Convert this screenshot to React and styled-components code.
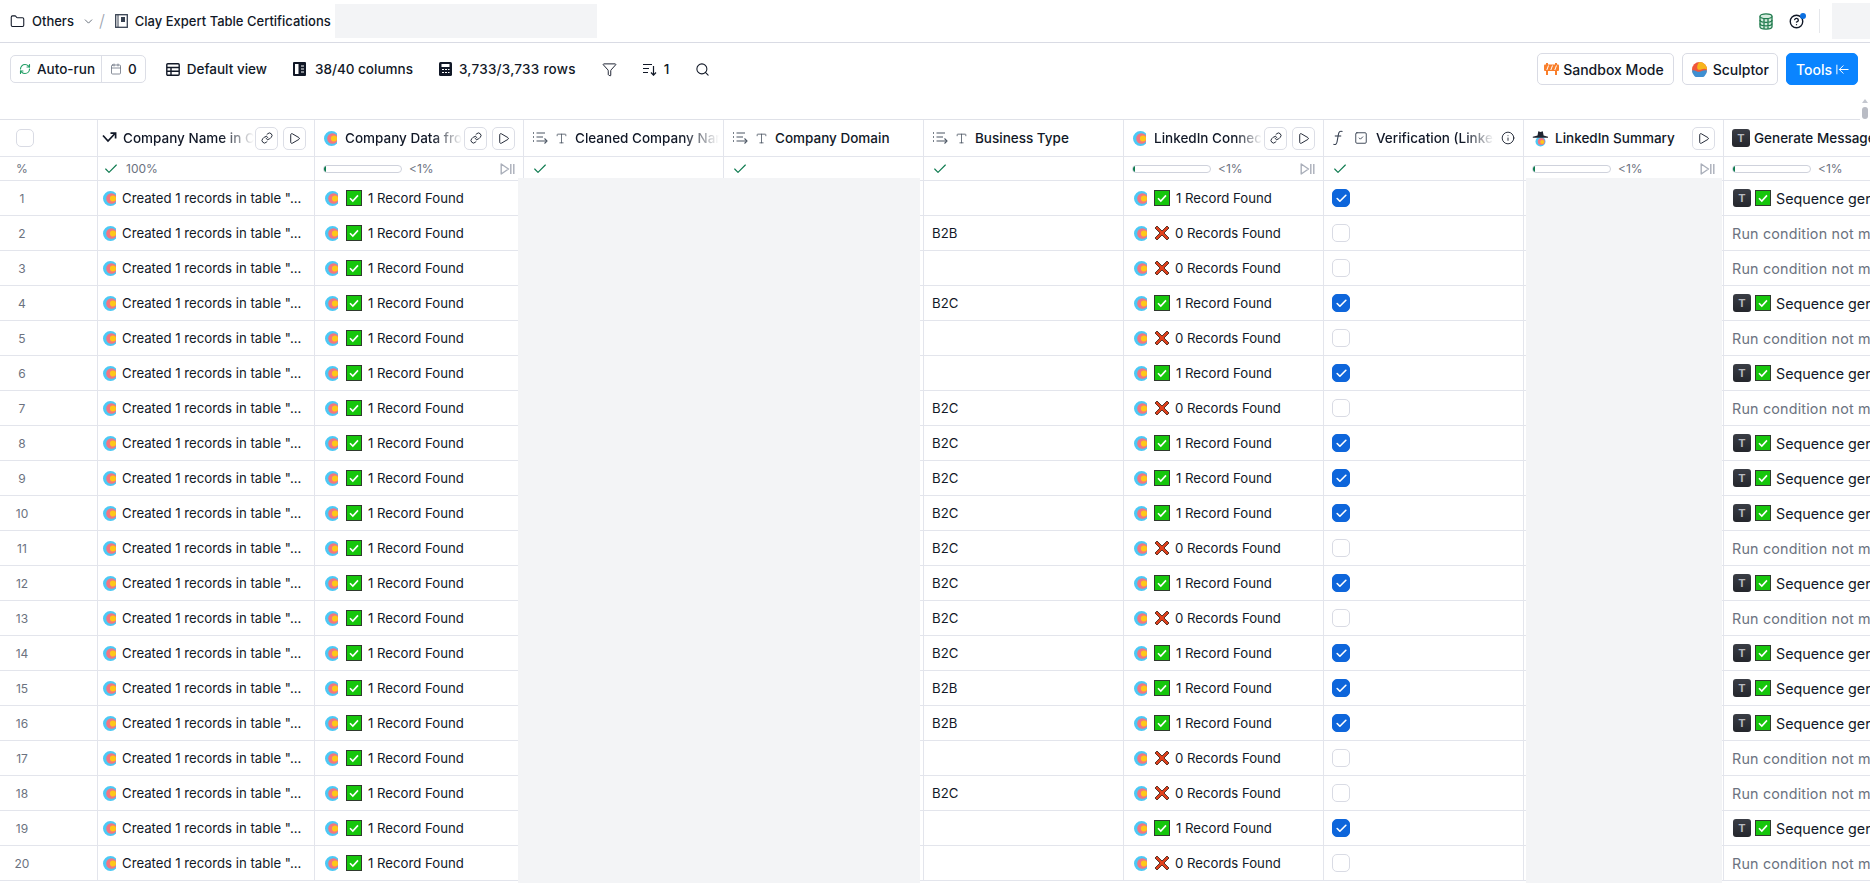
import React from "react";
import styled, { createGlobalStyle } from "styled-components";
import {
  ArrowLeftToLine,
  Calendar,
  Check,
  ChevronDown,
  CircleHelp,
  Filter,
  Folder,
  Info,
  Link,
  Play,
  RefreshCw,
  Search,
  SquareCheck,
  Type,
} from "lucide-react";

const GlobalStyle = createGlobalStyle`
  html, body {
    margin: 0;
    height: 100%;
    overflow: hidden;
    background: #fff;
    font-family: Inter, "Liberation Sans", sans-serif;
    color: #111827;
  }
  #root { height: 100%; }
`;

const LINE = "#e3e5ec";
const COLUMNS = "98px 217px 209px 200px 200px 200px 200px 200px 200px 200px";

const Page = styled.div`
  position: relative;
  height: 883px;
  display: flex;
  flex-direction: column;
  overflow: hidden;
`;

const TopBar = styled.header`
  height: 42px;
  flex: none;
  display: flex;
  align-items: center;
  padding-left: 10px;
  border-bottom: 1px solid #d9dbe4;
  font-size: 13px;
  font-weight: 500;
`;

const Crumb = styled.span`
  display: flex;
  align-items: center;
  gap: 7px;
  white-space: nowrap;
`;

const Slash = styled.span`
  margin: 0 7px 0 4px;
  font-size: 17px;
  font-weight: 300;
  color: #9ca3af;
`;

const TopSkeleton = styled.div`
  width: ${(p) => p.$width}px;
  height: ${(p) => p.$height}px;
  margin-left: ${(p) => p.$gap}px;
  background: #f3f4f6;
  flex: none;
`;

const TopRight = styled.div`
  margin-left: auto;
  display: flex;
  align-items: center;
`;

const HelpWrap = styled.span`
  position: relative;
  display: flex;
  margin-left: 16px;
  &::after {
    content: "";
    position: absolute;
    top: -1px;
    right: -2px;
    width: 6px;
    height: 6px;
    border-radius: 50%;
    background: #0b6fe0;
  }
`;

const VDivider = styled.span`
  width: 1px;
  height: 24px;
  margin-left: 15px;
  background: #e5e7eb;
`;

const Toolbar = styled.div`
  height: 76px;
  flex: none;
  display: flex;
  align-items: flex-start;
  padding: 10px 12px 0 10px;
  box-sizing: border-box;
`;

const ToolLeft = styled.div`
  height: 32px;
  display: flex;
  align-items: center;
  gap: 26px;
  font-size: 13.5px;
  font-weight: 500;
`;

const RunGroup = styled.div`
  height: 28px;
  display: flex;
  align-items: center;
  border: 1px solid #dcdee6;
  border-radius: 5px;
  box-sizing: border-box;
  margin-right: -6px;
`;

const RunPart = styled.span`
  height: 100%;
  display: flex;
  align-items: center;
  gap: 6px;
  padding: 0 ${(p) => p.$pad}px 0 ${(p) => p.$padLeft}px;
  & + & { border-left: 1px solid #dcdee6; }
`;

const ToolItem = styled.span`
  display: flex;
  align-items: center;
  gap: ${(p) => p.$gap || 7}px;
  white-space: nowrap;
  letter-spacing: ${(p) => p.$spacing || 0}px;
`;

const ToolRight = styled.div`
  margin-left: auto;
  display: flex;
  gap: 8px;
`;

const ToolButton = styled.button`
  height: 32px;
  display: flex;
  align-items: center;
  gap: ${(p) => p.$gap || 6}px;
  padding: 0 ${(p) => p.$padRight}px 0 ${(p) => p.$padLeft}px;
  border: 1px solid ${(p) => (p.$primary ? "#0a84ff" : "#d9dbe4")};
  border-radius: 5px;
  background: ${(p) => (p.$primary ? "#0a84ff" : "#fff")};
  color: ${(p) => (p.$primary ? "#fff" : "#111827")};
  font: 500 14px Inter, "Liberation Sans", sans-serif;
  white-space: nowrap;
`;

const Table = styled.div`
  position: relative;
  flex: 1;
  overflow: hidden;
  border-top: 1px solid #dfe1e8;
`;

const Row = styled.div`
  display: grid;
  grid-template-columns: ${COLUMNS};
  width: 1924px;
  height: ${(p) => p.$height}px;
  box-sizing: border-box;
  border-bottom: 1px solid ${LINE};
`;

const Cell = styled.div`
  display: flex;
  align-items: center;
  min-width: 0;
  padding-left: ${(p) => (p.$padLeft !== undefined ? p.$padLeft : 8)}px;
  padding-right: ${(p) => (p.$padRight ? p.$padRight : 0)}px;
  border-right: 1px solid ${LINE};
  box-sizing: border-box;
  overflow: hidden;
  white-space: nowrap;
  font-size: 13.2px;
`;

const IndexCell = styled(Cell)`
  justify-content: center;
  padding: 0 53px 0 0;
  color: #6b7280;
  font-size: 12px;
`;

const HeadCheckbox = styled.span`
  width: 18px;
  height: 18px;
  margin-left: 6px;
  border: 1px solid #d9dbe4;
  border-radius: 5px;
  box-sizing: border-box;
  flex: none;
`;

const HeadCell = styled(Cell)`
  gap: ${(p) => p.$gap || 7}px;
  font-weight: 500;
  font-size: 13.5px;
`;

const HeadLabel = styled.span`
  flex: 1;
  min-width: 0;
  overflow: hidden;
  ${(p) =>
    p.$fade &&
    `-webkit-mask-image: linear-gradient(to right, #000 75%, transparent 100%);
     mask-image: linear-gradient(to right, #000 75%, transparent 100%);`}
`;

const HeadButton = styled.span`
  width: 23px;
  height: 23px;
  margin-left: ${(p) => p.$gap || 0}px;
  display: flex;
  align-items: center;
  justify-content: center;
  flex: none;
  border: 1px solid #dcdee6;
  border-radius: 5px;
  box-sizing: border-box;
`;

const StatusCell = styled(Cell)`
  gap: 7px;
  font-size: 12px;
  color: #6b7280;
`;

const ProgressBar = styled.span`
  width: 79px;
  height: 8px;
  flex: none;
  box-sizing: border-box;
  border: 1px solid #cfd2dc;
  border-radius: 4px;
  overflow: hidden;
  &::before {
    content: "";
    display: block;
    width: 2px;
    height: 100%;
    background: #0d7a4f;
  }
`;

const PauseSlot = styled.span`
  margin-left: auto;
  display: flex;
  color: #a9aeb9;
`;

const DataCell = styled(Cell)`
  gap: ${(p) => p.$gap || 6}px;
  color: ${(p) => (p.$muted ? "#6b7280" : "#111827")};
  font-size: ${(p) => p.$size || 13.2}px;
  letter-spacing: ${(p) => (p.$muted ? 0.2 : 0)}px;
`;

const Ellipsis = styled.span`
  overflow: hidden;
`;

const Tick = styled.span`
  width: 18px;
  height: 18px;
  display: flex;
  align-items: center;
  justify-content: center;
  box-sizing: border-box;
  border-radius: 5px;
  flex: none;
  border: 1px solid ${(p) => (p.$on ? "#0e66db" : "#d9dbe4")};
  background: ${(p) => (p.$on ? "#0e66db" : "#fff")};
  color: #fff;
`;

const TypeBadge = styled.span`
  width: 18px;
  height: 18px;
  flex: none;
  display: flex;
  align-items: center;
  justify-content: center;
  border-radius: 3px;
  background: linear-gradient(#3a3d45, #24262c);
  color: #b5b8bf;
  font-size: 11px;
  font-weight: 700;
  line-height: 1;
`;

const Skeleton = styled.div`
  position: absolute;
  top: 58px;
  bottom: 0;
  left: ${(p) => p.$left}px;
  width: ${(p) => p.$width}px;
  background: #f3f4f6;
`;

const ScrollTrack = styled.div`
  position: absolute;
  top: 97px;
  right: 0;
  width: 10px;
  height: 23px;
  background: #fff;
`;

const ScrollArrow = styled.span`
  position: absolute;
  top: 2px;
  left: 2px;
  border: 3px solid transparent;
  border-top: 0;
  border-bottom: 4px solid #c4c7cf;
`;

const ScrollThumb = styled.span`
  position: absolute;
  top: 10px;
  left: 2px;
  width: 6px;
  height: 12px;
  border-radius: 3px;
  background: #b9bcc4;
`;

const ClayLogo = ({ gap = 0 }) => (
  <svg width="13" height="15" viewBox="0 0 13 15" style={{ flex: "none", marginRight: gap }}>
    <circle cx="7.5" cy="7.5" r="7.5" fill="#4cc9f5" />
    <circle cx="8.5" cy="7.5" r="5.3" fill="#f4757f" />
    <circle cx="10" cy="7.5" r="3.1" fill="#fdc81a" />
  </svg>
);

const GreenBox = () => (
  <svg width="16" height="16" viewBox="0 0 16 16" style={{ flex: "none" }}>
    <rect x="0.5" y="0.5" width="15" height="15" fill="#16c60c" stroke="#2f3a2e" />
    <path d="M4 8.2 6.8 11 12 5.4" fill="none" stroke="#fff" strokeWidth="1.6" />
  </svg>
);

const RedCross = () => (
  <svg width="16" height="16" viewBox="0 0 16 16" style={{ flex: "none", marginRight: -1 }}>
    <path
      d="M3 1 8 6l5-5 2 2-5 5 5 5-2 2-5-5-5 5-2-2 5-5-5-5z"
      fill="#e0401c"
      stroke="#4a2a20"
      strokeWidth="0.9"
      strokeLinejoin="round"
    />
  </svg>
);

const ListArrow = () => (
  <svg width="16" height="14" viewBox="0 0 16 14" fill="none" stroke="#4b5563" strokeWidth="1.1" style={{ flex: "none" }}>
    <path d="M1 2h1M1 6h1M1 10h1" strokeWidth="1.4" />
    <path d="M4.5 2H13M4.5 6H11M4.5 10H14" />
    <path d="M12.5 7.5 15 10l-2.5 2.5" />
  </svg>
);

const TrendArrow = () => (
  <svg width="15" height="12" viewBox="0 0 15 12" fill="none" stroke="#111827" strokeWidth="1.7" style={{ flex: "none" }}>
    <path d="M1 3.5 6 9l7-7.5" />
    <path d="M8.5 1.2H13.6V6.5" />
  </svg>
);

const PlayPause = () => (
  <svg width="15" height="12" viewBox="0 0 15 12" fill="none" stroke="currentColor" strokeWidth="1.4">
    <path d="M1.2 1v10L8.5 6z" strokeLinejoin="round" />
    <path d="M10.8 1v10M13.8 1v10" />
  </svg>
);

const FuncIcon = () => (
  <svg width="12" height="16" viewBox="0 0 12 16" fill="none" stroke="#374151" strokeWidth="1.1" style={{ flex: "none", marginRight: 3 }}>
    <path d="M10.5 1.6C8 .4 6.8 2 6.4 4.5L5 12c-.4 2.2-1.6 3-3.6 2.2" />
    <path d="M2.8 6h6.4" />
  </svg>
);

const SpyLogo = () => (
  <svg width="17" height="17" viewBox="0 0 17 17" style={{ flex: "none" }}>
    <circle cx="8.5" cy="11.5" r="5" fill="#4cc9f5" />
    <circle cx="9.3" cy="11.5" r="3.5" fill="#f4757f" />
    <circle cx="10.2" cy="12" r="2" fill="#fdc81a" />
    <path d="M5.5 5.6 6.3 1.2 8.5 2l2.3-.8.8 4.4 4.4 1.1v1H.8v-1z" fill="#1f2430" />
  </svg>
);

const DatabaseIcon = () => (
  <svg width="14" height="17" viewBox="0 0 14 17" fill="#d6ecdf" stroke="#1f7a4d" strokeWidth="1.3" style={{ flex: "none" }}>
    <path d="M1 3.2v10.600c0 1.300 2.700 2.400 6 2.400s6-1.100 6-2.400V3.200" />
    <ellipse cx="7" cy="3.2" rx="6" ry="2.4" />
    <path d="M1 7c0 1.300 2.700 2.400 6 2.400S13 8.300 13 7M1 10.500c0 1.300 2.700 2.400 6 2.400s6-1.100 6-2.400M5 6v10M9 6v10" fill="none" />
  </svg>
);

const FolderDoc = () => (
  <svg width="13" height="14" viewBox="0 0 13 14" fill="none" style={{ flex: "none", marginLeft: 3 }}>
    <rect x="0.7" y="0.7" width="11.6" height="12.6" stroke="#374151" strokeWidth="1.3" />
    <rect x="6" y="3" width="4" height="5" fill="#374151" />
    <path d="M3 1v12" stroke="#374151" />
  </svg>
);

const TableIcon = () => (
  <svg width="14" height="13" viewBox="0 0 14 13" fill="none" stroke="#111827" strokeWidth="1.4" style={{ flex: "none" }}>
    <rect x="0.8" y="0.8" width="12.4" height="11.4" rx="1" />
    <path d="M1 4.5h12M1 8.3h12M5 4.5v8" />
  </svg>
);

const ColumnsIcon = () => (
  <svg width="13" height="14" viewBox="0 0 13 14" style={{ flex: "none" }}>
    <path d="M1 0h11a1 1 0 0 1 1 1v12a1 1 0 0 1-1 1H1a1 1 0 0 1-1-1V1a1 1 0 0 1 1-1z" fill="#111827" />
    <rect x="2" y="2" width="3.5" height="10" fill="#fff" />
    <path d="M8 4h3M8 7h3M8 10h3" stroke="#fff" />
  </svg>
);

const CalcIcon = () => (
  <svg width="13" height="14" viewBox="0 0 13 14" style={{ flex: "none" }}>
    <rect width="13" height="14" rx="1.5" fill="#111827" />
    <rect x="2.5" y="2" width="8" height="3" fill="#fff" />
    <path d="M3 7.5h2M6 7.5h2M9 7.5h1.5M3 10.5h2M6 10.5h2M9 10.5h1.5" stroke="#fff" strokeWidth="1.2" />
  </svg>
);

const SortIcon = () => (
  <svg width="14" height="13" viewBox="0 0 14 13" fill="none" stroke="#111827" strokeWidth="1.2" style={{ flex: "none" }}>
    <path d="M0 1.5h9M0 5.5h6M0 9.5h5" />
    <path d="M10.5 3v9M8 9.5l2.5 2.7 2.5-2.7" />
  </svg>
);

const SandboxIcon = () => (
  <svg width="15" height="12" viewBox="0 0 15 12" style={{ flex: "none" }}>
    <path d="M3 0v12M12 0v12" stroke="#f97f2c" strokeWidth="2" />
    <rect y="1.5" width="15" height="6.5" rx="1" fill="#f97f2c" />
    <path d="M4.5 2.500 2.800 7M8.500 2.500 6.800 7M12.500 2.500 10.800 7" stroke="#fff" strokeWidth="1" />
  </svg>
);

const SculptorIcon = () => (
  <svg width="15" height="15" viewBox="0 0 15 15" style={{ flex: "none" }}>
    <circle cx="7.5" cy="7.5" r="7.5" fill="#f0563c" />
    <path d="M7.5 0A7.5 7.5 0 0 1 15 7.5C11 5 9 9 6 7.5 4.500 6.700 5 2 7.500 0z" fill="#f7b51c" />
    <path d="M0 8.500C3 7 5 11 8.500 9.500 11 8.500 13 8 15 8.500A7.500 7.500 0 0 1 0 8.500z" fill="#3f8fd1" />
  </svg>
);

const HeadLink = () => (
  <HeadButton $gap={-5}>
    <Link size={12} strokeWidth={1.8} />
  </HeadButton>
);

const HeadPlay = ({ gap }) => (
  <HeadButton $gap={gap}>
    <Play size={13} strokeWidth={1.7} />
  </HeadButton>
);

const StatusDone = () => <Check size={16} strokeWidth={1.7} color="#0d7a4f" style={{ flexShrink: 0 }} />;

const StatusBar = () => (
  <>
    <ProgressBar />
    <span>&lt;1%</span>
    <PauseSlot>
      <PlayPause />
    </PauseSlot>
  </>
);

const businessTypes = [
  "", "B2B", "", "B2C", "", "", "B2C", "B2C", "B2C", "B2C",
  "B2C", "B2C", "B2C", "B2C", "B2B", "B2B", "", "B2C", "", "",
];

const linkedinFound = [1, 0, 0, 1, 0, 1, 0, 1, 1, 1, 0, 1, 0, 1, 1, 1, 0, 0, 1, 0];

export default function App() {
  return (
    <Page>
      <GlobalStyle />
      <TopBar>
        <Crumb>
          <Folder size={15} strokeWidth={1.7} />
          Others
          <ChevronDown size={13} strokeWidth={1.5} color="#4b5563" style={{ marginLeft: 1 }} />
        </Crumb>
        <Slash>/</Slash>
        <Crumb>
          <FolderDoc />
          Clay Expert Table Certifications
        </Crumb>
        <TopSkeleton $width={262} $height={34} $gap={4} />
        <TopRight>
          <DatabaseIcon />
          <HelpWrap>
            <CircleHelp size={15} strokeWidth={2.2} />
          </HelpWrap>
          <VDivider />
          <TopSkeleton $width={38} $height={36} $gap={12} />
        </TopRight>
      </TopBar>

      <Toolbar>
        <ToolLeft>
          <RunGroup>
            <RunPart $padLeft={8} $pad={6}>
              <RefreshCw size={12} strokeWidth={2.2} color="#1f9d63" />
              Auto-run
            </RunPart>
            <RunPart $padLeft={8} $pad={8}>
              <Calendar size={12} strokeWidth={1.6} color="#6b7280" />
              0
            </RunPart>
          </RunGroup>
          <ToolItem>
            <TableIcon />
            Default view
          </ToolItem>
          <ToolItem $gap={9}>
            <ColumnsIcon />
            38/40 columns
          </ToolItem>
          <ToolItem $spacing={0.25}>
            <CalcIcon />
            3,733/3,733 rows
          </ToolItem>
          <ToolItem>
            <Filter size={15} strokeWidth={1.5} />
          </ToolItem>
          <ToolItem>
            <SortIcon />
            1
          </ToolItem>
          <ToolItem>
            <Search size={15} strokeWidth={1.7} />
          </ToolItem>
        </ToolLeft>
        <ToolRight>
          <ToolButton $padLeft={6} $padRight={9} $gap={4}>
            <SandboxIcon />
            Sandbox Mode
          </ToolButton>
          <ToolButton $padLeft={9} $padRight={8}>
            <SculptorIcon />
            Sculptor
          </ToolButton>
          <ToolButton $primary $padLeft={9} $padRight={7} $gap={3}>
            Tools
            <ArrowLeftToLine size={15} strokeWidth={1.6} />
          </ToolButton>
        </ToolRight>
      </Toolbar>

      <Table>
        <Row $height={37}>
          <IndexCell>
            <HeadCheckbox />
          </IndexCell>
          <HeadCell $padLeft={4} $padRight={8} $gap={6}>
            <TrendArrow />
            <HeadLabel $fade>Company Name in Clay</HeadLabel>
            <HeadLink />
            <HeadPlay gap={-1} />
          </HeadCell>
          <HeadCell $padLeft={9} $padRight={8}>
            <ClayLogo gap={1} />
            <HeadLabel $fade>Company Data from Clay</HeadLabel>
            <HeadLink />
            <HeadPlay gap={-2} />
          </HeadCell>
          <HeadCell $padRight={4}>
            <ListArrow />
            <Type size={13} strokeWidth={1.5} color="#4b5563" style={{ flexShrink: 0 }} />
            <HeadLabel $fade>Cleaned Company Name</HeadLabel>
          </HeadCell>
          <HeadCell>
            <ListArrow />
            <Type size={13} strokeWidth={1.5} color="#4b5563" style={{ flexShrink: 0 }} />
            <HeadLabel>Company Domain</HeadLabel>
          </HeadCell>
          <HeadCell>
            <ListArrow />
            <Type size={13} strokeWidth={1.5} color="#4b5563" style={{ flexShrink: 0 }} />
            <HeadLabel>Business Type</HeadLabel>
          </HeadCell>
          <HeadCell $padLeft={9} $padRight={8}>
            <ClayLogo gap={1} />
            <HeadLabel $fade>LinkedIn Connections</HeadLabel>
            <HeadLink />
            <HeadPlay gap={-2} />
          </HeadCell>
          <HeadCell $padRight={8}>
            <FuncIcon />
            <SquareCheck size={14} strokeWidth={1.6} color="#374151" style={{ flexShrink: 0, marginRight: 1 }} />
            <HeadLabel $fade>Verification (LinkedIn)</HeadLabel>
            <Info size={14} strokeWidth={1.5} style={{ flexShrink: 0 }} />
          </HeadCell>
          <HeadCell $padRight={8} $gap={6}>
            <SpyLogo />
            <HeadLabel>LinkedIn Summary</HeadLabel>
            <HeadPlay />
          </HeadCell>
          <HeadCell $gap={4}>
            <TypeBadge>T</TypeBadge>
            <HeadLabel>Generate Message Sequence</HeadLabel>
          </HeadCell>
        </Row>

        <Row $height={24}>
          <IndexCell>%</IndexCell>
          <StatusCell $padLeft={5}>
            <StatusDone />
            100%
          </StatusCell>
          <StatusCell $padRight={8}>
            <StatusBar />
          </StatusCell>
          <StatusCell>
            <StatusDone />
          </StatusCell>
          <StatusCell>
            <StatusDone />
          </StatusCell>
          <StatusCell>
            <StatusDone />
          </StatusCell>
          <StatusCell $padRight={8}>
            <StatusBar />
          </StatusCell>
          <StatusCell>
            <StatusDone />
          </StatusCell>
          <StatusCell $padRight={8}>
            <StatusBar />
          </StatusCell>
          <StatusCell $padRight={8}>
            <StatusBar />
          </StatusCell>
        </Row>

        {businessTypes.map((type, i) => {
          const found = linkedinFound[i] === 1;
          return (
            <Row key={i} $height={35}>
              <IndexCell>{i + 1}</IndexCell>
              <DataCell $padLeft={5}>
                <ClayLogo />
                <Ellipsis>Created 1 records in table "...</Ellipsis>
              </DataCell>
              <DataCell $padLeft={10}>
                <ClayLogo gap={2} />
                <GreenBox />
                1 Record Found
              </DataCell>
              <DataCell />
              <DataCell />
              <DataCell>{type}</DataCell>
              <DataCell $padLeft={10}>
                <ClayLogo gap={1} />
                {found ? <GreenBox /> : <RedCross />}
                {found ? "1 Record Found" : "0 Records Found"}
              </DataCell>
              <DataCell>
                <Tick $on={found}>{found && <Check size={13} strokeWidth={3} />}</Tick>
              </DataCell>
              <DataCell />
              {found ? (
                <DataCell $padLeft={9} $gap={4} $size={14.3}>
                  <TypeBadge>T</TypeBadge>
                  <GreenBox />
                  <Ellipsis style={{ marginLeft: 1 }}>Sequence generated</Ellipsis>
                </DataCell>
              ) : (
                <DataCell $muted $size={14.3}>
                  Run condition not met
                </DataCell>
              )}
            </Row>
          );
        })}

        <Skeleton $left={518} $width={402} />
        <Skeleton $left={1526} $width={196} />
      </Table>
      <ScrollTrack>
        <ScrollArrow />
        <ScrollThumb />
      </ScrollTrack>
    </Page>
  );
}
